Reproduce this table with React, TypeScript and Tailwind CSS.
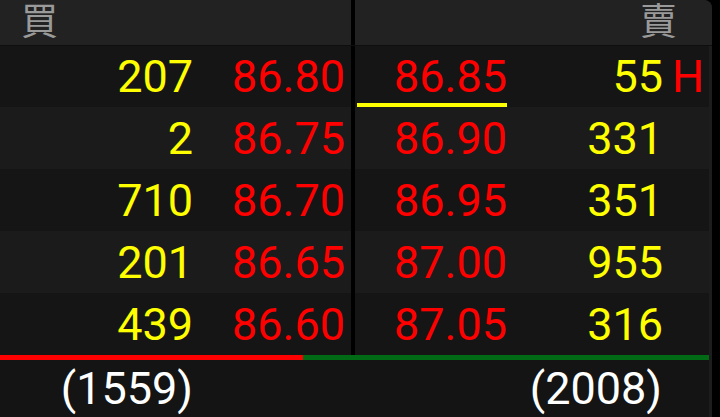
const rows = [
  { bq: "207", bp: "86.80", ap: "86.85", aq: "55", h: true },
  { bq: "2", bp: "86.75", ap: "86.90", aq: "331" },
  { bq: "710", bp: "86.70", ap: "86.95", aq: "351" },
  { bq: "201", bp: "86.65", ap: "87.00", aq: "955" },
  { bq: "439", bp: "86.60", ap: "87.05", aq: "316" },
];

export default function App() {
  return (
    <div className="w-[720px] h-[417px] bg-black flex font-['Roboto',sans-serif] leading-none overflow-hidden">
      <div className="w-[712px] flex flex-col bg-[#1d1d1d] rounded-tr-lg overflow-hidden">
        {/* Header */}
        <div className="h-[46px] shrink-0 flex bg-[#222222] border-b border-[#0e0e0e] font-['Noto_Sans_CJK_TC',sans-serif] text-[37px] leading-[39px] text-[#9a9a9a]">
          <div className="w-[351px] flex items-start pl-[21px]">買</div>
          <div className="w-[4px] bg-black" />
          <div className="flex-1 flex items-start justify-end pr-[35px]">賣</div>
        </div>

        {/* Order book rows */}
        {rows.map((r, i) => (
          <div
            key={i}
            className={`w-[709px] flex shrink-0 text-[45px] ${i === 0 ? "h-[61px]" : "h-[62px]"} ${
              i % 2 === 0 ? "bg-[#151515]" : "bg-[#1b1b1b]"
            }`}
          >
            <div className="w-[351px] flex items-center">
              <span className="w-[193px] text-right text-[#ffff00]">{r.bq}</span>
              <span className="w-[152px] text-right text-[#ff0000]">{r.bp}</span>
            </div>
            <div className="w-[4px] bg-black" />
            <div className="flex-1 flex items-center">
              <div
                className={`ml-[2px] w-[150px] h-full flex items-center justify-end text-[#ff0000] ${
                  r.h ? "border-b-4 border-[#ffff00] mb-[1px]" : ""
                }`}
              >
                <span className={r.h ? "pt-[4px]" : ""}>{r.ap}</span>
              </div>
              <span className="w-[156px] text-right text-[#ffff00]">{r.aq}</span>
              {r.h && <span className="ml-[9px] text-[#ff0000]">H</span>}
            </div>
          </div>
        ))}

        {/* Volume ratio bar */}
        <div className="w-[709px] h-[5px] flex shrink-0">
          <div className="w-[303px] bg-[#ff0000]" />
          <div className="flex-1 bg-[#006a14]" />
        </div>

        {/* Totals */}
        <div className="w-[709px] flex-1 flex items-center bg-[#141414] text-[45px] text-white">
          <span className="w-[193px] text-right">(1559)</span>
          <span className="w-[469px] text-right">(2008)</span>
        </div>
      </div>
    </div>
  );
}
